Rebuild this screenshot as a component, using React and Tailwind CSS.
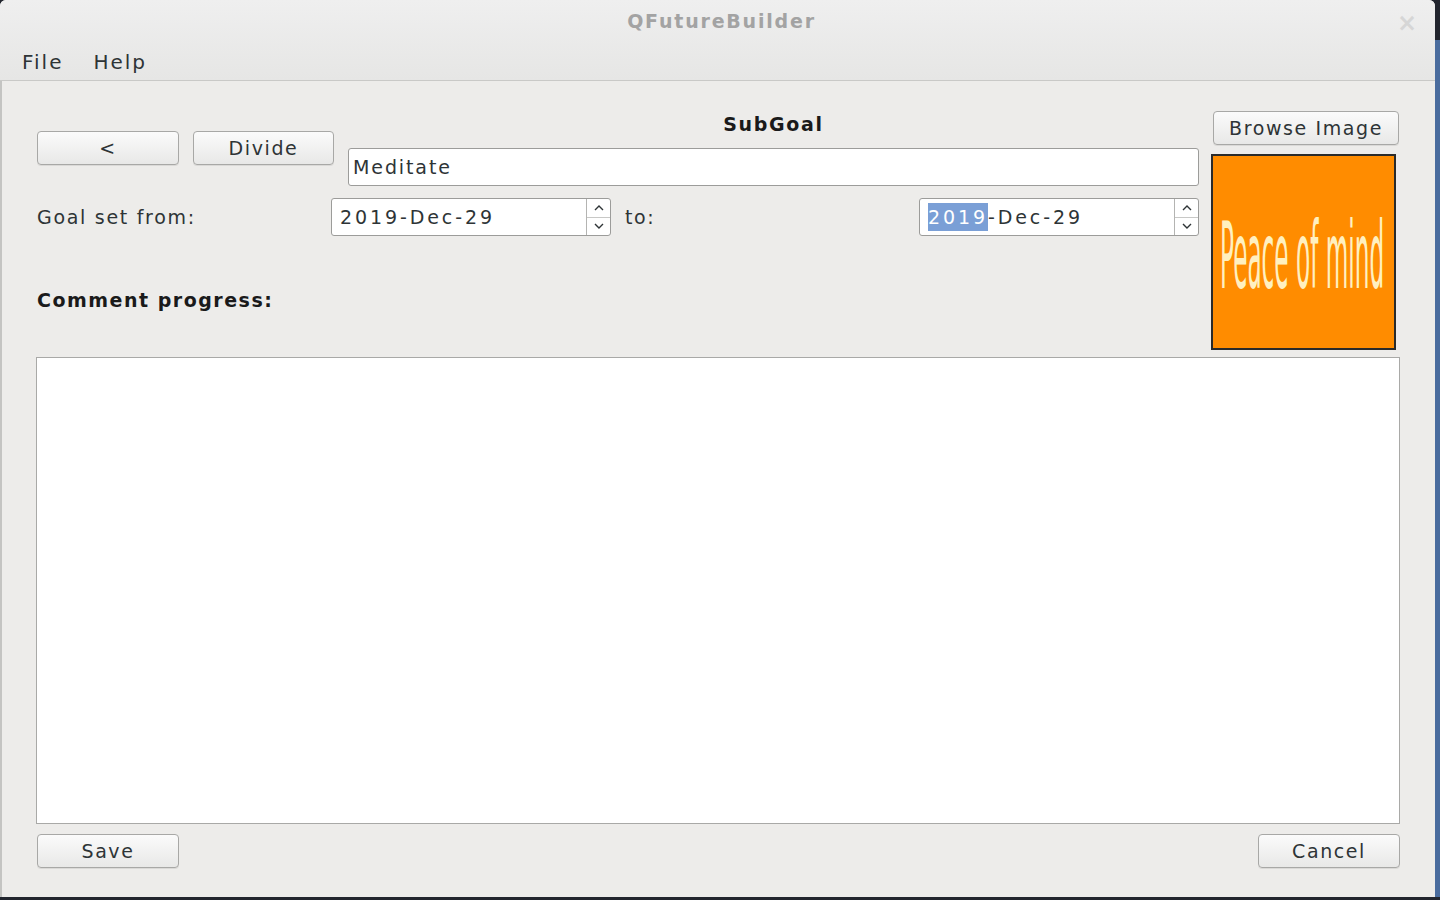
import React from "react";

const font = { fontFamily: '"DejaVu Sans", "Noto Sans", sans-serif' };

function QtButton({ children, className = "" }) {
  return (
    <button
      className={`flex items-center justify-center rounded-[4px] border border-[#a8a8a6] bg-gradient-to-b from-[#fbfbfb] to-[#e8e8e7] text-[19px] tracking-[1.6px] text-[#2e3436] shadow-[0_1px_0_rgba(0,0,0,0.08)] ${className}`}
    >
      {children}
    </button>
  );
}

function DateSpin({ selected }) {
  return (
    <div className="flex h-[38px] w-[280px] rounded-[3px] border border-[#9c9c9a] bg-white">
      <div className="flex flex-1 items-center pl-[8px] text-[19px] tracking-[2.9px] text-[#2e3436]">
        {selected ? (
          <>
            <span className="bg-[#7a9fd6] text-white">2019</span>
            <span>-Dec-29</span>
          </>
        ) : (
          <span>2019-Dec-29</span>
        )}
      </div>
      <div className="flex w-[24px] flex-col border-l border-[#b4b4b2]">
        <div className="flex flex-1 items-center justify-center border-b border-[#c8c8c6]">
          <svg width="10" height="6" viewBox="0 0 10 6">
            <path d="M1 5 L5 1 L9 5" fill="none" stroke="#2e3436" strokeWidth="1.4" />
          </svg>
        </div>
        <div className="flex flex-1 items-center justify-center">
          <svg width="10" height="6" viewBox="0 0 10 6">
            <path d="M1 1 L5 5 L9 1" fill="none" stroke="#2e3436" strokeWidth="1.4" />
          </svg>
        </div>
      </div>
    </div>
  );
}

export default function App() {
  return (
    <div className="flex h-screen w-full overflow-hidden bg-[#22252e]" style={font}>
      <div className="flex h-[897px] w-[1435px] flex-col overflow-hidden rounded-t-[6px] bg-[#edecea]">
        {/* title + menu */}
        <div className="border-b border-[#c9c9c7] bg-gradient-to-b from-[#efefef] to-[#e6e6e5]">
          <div className="relative flex h-[43px] items-center justify-center">
            <span className="pl-[8px] text-[19px] font-bold tracking-[1.8px] text-[#a3a3a3]">
              QFutureBuilder
            </span>
            <span className="absolute right-[18px] top-[5px] text-[24px] font-bold text-[#d6d6d6]">
              ×
            </span>
          </div>
          <div className="flex h-[37px] items-center gap-[30px] pl-[22px] text-[20px] tracking-[2px] text-[#2e3436]">
            <span>File</span>
            <span>Help</span>
          </div>
        </div>

        {/* body */}
        <div className="flex flex-1 flex-col border-l-2 border-[#c4c4c2] pl-[35px] pr-[35px]">
          <div className="mt-[30px] flex">
            <div className="flex w-[1162px] flex-col">
              <div className="flex items-start">
                <QtButton className="mt-[20px] h-[34px] w-[142px]">&lt;</QtButton>
                <QtButton className="ml-[14px] mt-[20px] h-[34px] w-[141px]">Divide</QtButton>
                <div className="ml-[14px] flex flex-1 flex-col">
                  <div className="flex h-[27px] items-end justify-center text-[19px] font-bold tracking-[1.7px] text-[#1a1a1a]">
                    SubGoal
                  </div>
                  <div className="mt-[10px] flex h-[38px] items-center rounded-[3px] border border-[#9c9c9a] bg-white pl-[4px] text-[19px] tracking-[1.9px] text-[#2e3436]">
                    Meditate
                  </div>
                </div>
              </div>
              <div className="mt-[12px] flex items-center">
                <div className="w-[294px] text-[19px] tracking-[1.7px] text-[#2e3436]">
                  Goal set from:
                </div>
                <DateSpin />
                <div className="ml-[14px] flex-1 text-[19px] tracking-[1.6px] text-[#2e3436]">
                  to:
                </div>
                <DateSpin selected />
              </div>
              <div className="mt-[50px] text-[19px] font-bold tracking-[1.5px] text-[#1a1a1a]">
                Comment progress:
              </div>
            </div>
            <div className="ml-[14px] flex w-[186px] flex-col">
              <QtButton className="h-[34px] w-[186px]">Browse Image</QtButton>
              <div className="-ml-[2px] mt-[9px] h-[196px] w-[185px] overflow-hidden border-2 border-[#2a2a2a] bg-[#ff8c00] pl-[7px] pt-[55px]">
                <div className="origin-left scale-x-[0.252] whitespace-nowrap text-[92px] leading-none text-[#fff0c0]">
                  Peace of mind
                </div>
              </div>
            </div>
          </div>

          <div className="-ml-[1px] mt-[7px] h-[467px] w-[1364px] border border-[#a9a9a7] bg-white" />

          <div className="mt-[10px] flex justify-between">
            <QtButton className="h-[34px] w-[142px]">Save</QtButton>
            <QtButton className="h-[34px] w-[142px]">Cancel</QtButton>
          </div>
        </div>
      </div>
      <div className="mt-[40px] h-[857px] flex-1 bg-[#4a6c9e]" />
    </div>
  );
}
